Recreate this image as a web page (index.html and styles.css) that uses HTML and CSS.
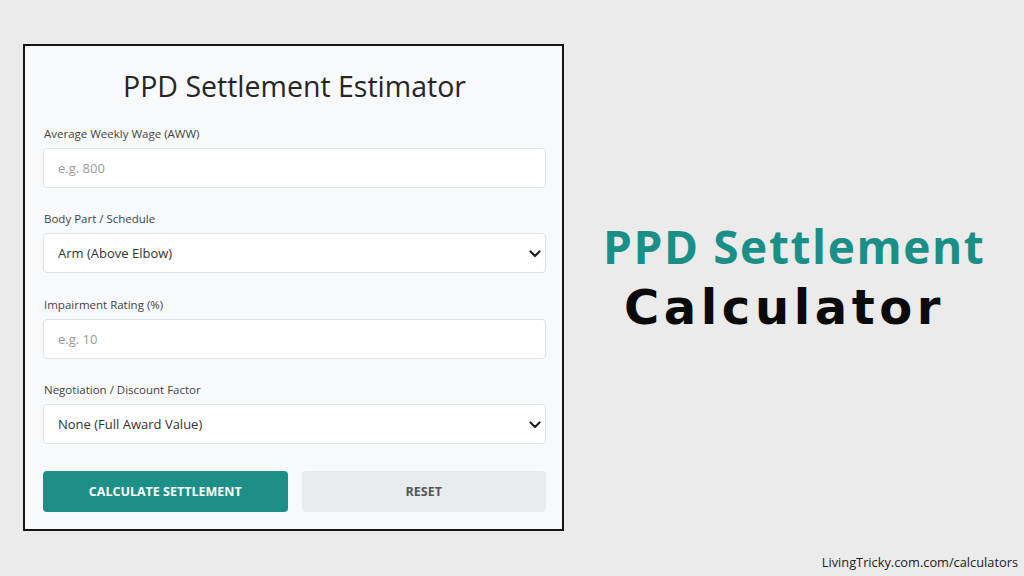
FILE: index.html
```html
<!DOCTYPE html>
<html lang="en">
<head>
    <meta charset="UTF-8">
    <meta name="viewport" content="width=device-width, initial-scale=1.0">
    <title>PPD Settlement Calculator</title>
    <link rel="stylesheet" href="styles.css">
</head>
<body>
    <div class="page">
        <!-- Estimator form -->
        <div class="estimator">
            <h1 class="estimator-title">PPD Settlement Estimator</h1>

            <div class="field">
                <label class="field-label" for="aww">Average Weekly Wage (AWW)</label>
                <input class="field-input" id="aww" type="text" placeholder="e.g. 800">
            </div>

            <div class="field">
                <label class="field-label" for="body-part">Body Part / Schedule</label>
                <div class="select-wrap">
                    <select class="field-input field-select" id="body-part">
                        <option>Arm (Above Elbow)</option>
                        <option>Arm (Below Elbow)</option>
                        <option>Hand</option>
                        <option>Leg</option>
                    </select>
                    <svg class="chevron" width="12" height="8" viewBox="0 0 12 8"><path d="M1.5 1.5 L6 6 L10.5 1.5" fill="none" stroke="#222" stroke-width="2.2" stroke-linecap="round" stroke-linejoin="round"/></svg>
                </div>
            </div>

            <div class="field">
                <label class="field-label" for="rating">Impairment Rating (%)</label>
                <input class="field-input" id="rating" type="text" placeholder="e.g. 10">
            </div>

            <div class="field">
                <label class="field-label" for="discount">Negotiation / Discount Factor</label>
                <div class="select-wrap">
                    <select class="field-input field-select" id="discount">
                        <option>None (Full Award Value)</option>
                        <option>10% Discount</option>
                        <option>20% Discount</option>
                    </select>
                    <svg class="chevron" width="12" height="8" viewBox="0 0 12 8"><path d="M1.5 1.5 L6 6 L10.5 1.5" fill="none" stroke="#222" stroke-width="2.2" stroke-linecap="round" stroke-linejoin="round"/></svg>
                </div>
            </div>

            <div class="actions">
                <button class="btn btn-primary">Calculate Settlement</button>
                <button class="btn btn-reset">Reset</button>
            </div>
        </div>

        <!-- Headline -->
        <div class="headline">
            <div class="headline-top">PPD Settlement</div>
            <div class="headline-bottom">Calculator</div>
        </div>
    </div>

    <div class="site-link">LivingTricky.com.com/calculators</div>
</body>
</html>
```

FILE: styles.css
```css
body {
    margin: 0;
    background-color: #ebebeb;
    font-family: 'Open Sans', 'Noto Sans', sans-serif;
    width: 1024px;
    height: 576px;
    overflow: hidden;
    position: relative;
}

.page {
    display: flex;
    align-items: flex-start;
    padding: 44px 0 0 23px;
}

.estimator {
    box-sizing: border-box;
    width: 541px;
    height: 487px;
    background-color: #f8f9fa;
    border: 2px solid #151515;
    padding: 23px 16px 0 18px;
}

.estimator-title {
    margin: 0 0 22px;
    font-size: 28.5px;
    line-height: 34px;
    font-weight: 500;
    color: #262626;
    text-align: center;
}

.field {
    margin-bottom: 22.4px;
}

.field-label {
    display: block;
    font-size: 11.5px;
    line-height: 17px;
    color: #444;
    margin: 0 0 6px 1px;
}

.field-input {
    display: block;
    width: 100%;
    height: 40px;
    box-sizing: border-box;
    border: 1px solid #dfe2e6;
    border-radius: 4px;
    background-color: #fff;
    padding: 0 14px;
    font-family: inherit;
    font-size: 13px;
    color: #333;
    outline: none;
}

.field-input::placeholder {
    color: #9a9a9a;
}

.select-wrap {
    position: relative;
}

.field-select {
    appearance: none;
    -webkit-appearance: none;
}

.chevron {
    position: absolute;
    right: 5px;
    top: 17px;
}

.actions {
    display: flex;
    gap: 14px;
    margin-top: 27px;
}

.btn {
    flex: 1;
    height: 41px;
    border: none;
    border-radius: 4px;
    font-family: inherit;
    font-size: 12.5px;
    font-weight: 700;
    text-transform: uppercase;
    cursor: pointer;
}

.btn-primary {
    background-color: #1c8f86;
    color: #fff;
}

.btn-reset {
    background-color: #e9ecef;
    color: #555;
}

.headline {
    flex: 1;
    display: flex;
    flex-direction: column;
    align-items: flex-start;
    padding-top: 174px;
}

.headline-top {
    margin-left: 39px;
    font-family: 'Open Sans', sans-serif;
    font-weight: 700;
    font-size: 46px;
    line-height: 56px;
    letter-spacing: 1.6px;
    color: #1a8f87;
}

.headline-bottom {
    margin: 5px 0 0 60px;
    font-family: 'DejaVu Sans', sans-serif;
    font-weight: 700;
    font-size: 48px;
    line-height: 56px;
    letter-spacing: 4.6px;
    color: #0a0a0a;
}

.site-link {
    position: absolute;
    right: 6px;
    bottom: 5px;
    font-size: 12.8px;
    color: #222;
}
```
